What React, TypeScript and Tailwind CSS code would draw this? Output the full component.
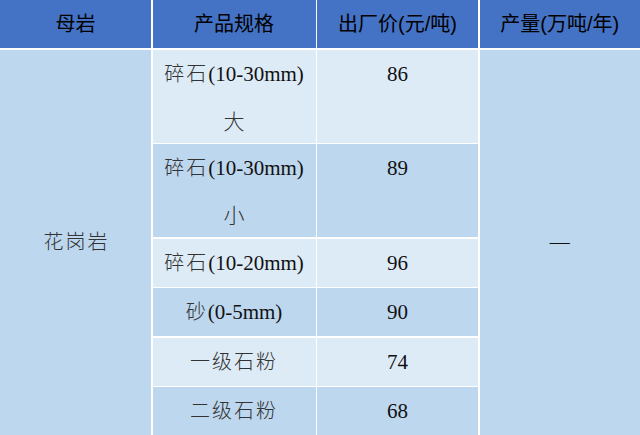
import React from "react";

const serif = "font-['Liberation_Serif','Noto_Sans_CJK_SC',serif]";

export default function App() {
  const light = "bg-[#DDEBF7]";
  const dark = "bg-[#BDD7EE]";
  const cell = `flex flex-col items-center text-[21px] leading-[48px] text-[#111] ${serif}`;
  const head =
    "flex items-center justify-center bg-[#4472C4] text-[20px] text-black font-['Liberation_Sans','Noto_Sans_CJK_SC',sans-serif]";
  const cjk = "font-light text-[#333]";
  const sp = `${cjk} tracking-[2px] text-[20px]`;
  return (
    <div className="w-[640px] h-[435px] bg-white overflow-hidden">
      <div className="grid h-full grid-cols-[151px_163px_161px_1fr] grid-rows-[48px_repeat(8,1fr)] gap-[1.5px]">
        <div className={head}>母岩</div>
        <div className={head}>产品规格</div>
        <div className={head}>出厂价(元/吨)</div>
        <div className={head}>产量(万吨/年)</div>

        <div className={`row-span-8 col-start-1 row-start-2 flex items-center justify-center ${dark} text-[20px] ${serif}`}>
          <span className={`pl-[2px] tracking-[2px] ${cjk}`}>花岗岩</span>
        </div>

        <div className={`row-span-2 col-start-2 row-start-2 ${cell} ${light}`}>
          <span><span className={sp}>碎石</span>(10-30mm)</span>
          <span className={cjk}>大</span>
        </div>
        <div className={`row-span-2 col-start-3 row-start-2 ${cell} ${light}`}>
          <span>86</span>
        </div>

        <div className={`row-span-2 col-start-2 row-start-4 ${cell} ${dark}`}>
          <span><span className={sp}>碎石</span>(10-30mm)</span>
          <span className={cjk}>小</span>
        </div>
        <div className={`row-span-2 col-start-3 row-start-4 ${cell} ${dark}`}>
          <span>89</span>
        </div>

        <div className={`col-start-2 row-start-6 ${cell} ${light}`}>
          <span><span className={sp}>碎石</span>(10-20mm)</span>
        </div>
        <div className={`col-start-3 row-start-6 ${cell} ${light}`}>
          <span>96</span>
        </div>

        <div className={`col-start-2 row-start-7 ${cell} ${dark}`}>
          <span><span className={sp}>砂</span>(0-5mm)</span>
        </div>
        <div className={`col-start-3 row-start-7 ${cell} ${dark}`}>
          <span>90</span>
        </div>

        <div className={`col-start-2 row-start-8 ${cell} ${light}`}>
          <span className={`tracking-[2px] text-[20px] ${cjk}`}>一级石粉</span>
        </div>
        <div className={`col-start-3 row-start-8 ${cell} ${light}`}>
          <span>74</span>
        </div>

        <div className={`col-start-2 row-start-9 ${cell} ${dark}`}>
          <span className={`tracking-[2px] text-[20px] ${cjk}`}>二级石粉</span>
        </div>
        <div className={`col-start-3 row-start-9 ${cell} ${dark}`}>
          <span>68</span>
        </div>

        <div className={`row-span-8 col-start-4 row-start-2 flex items-center justify-center ${dark} text-[20px] text-[#111] ${serif}`}>
          <span>—</span>
        </div>
      </div>
    </div>
  );
}
